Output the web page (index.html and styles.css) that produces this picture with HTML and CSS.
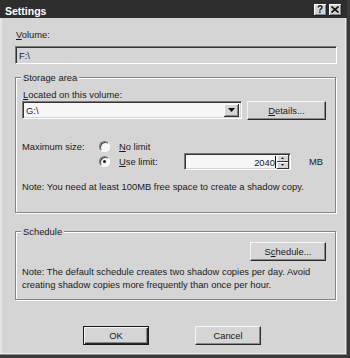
FILE: index.html
```html
<!DOCTYPE html>
<html lang="en">
<head>
    <meta charset="UTF-8">
    <meta name="viewport" content="width=device-width, initial-scale=1.0">
    <title>Settings</title>
    <link rel="stylesheet" href="styles.css">
</head>
<body>
    <div class="window">
        <div class="titlebar">
            <span class="title">Settings</span>
            <div class="title-buttons">
                <span class="tbtn help">?</span>
                <span class="tbtn close">
                    <svg width="8" height="7" viewBox="0 0 8 7"><path d="M0.5 0.5 L7.5 6.5 M7.5 0.5 L0.5 6.5" stroke="#111" stroke-width="1.6"/></svg>
                </span>
            </div>
        </div>

        <div class="content">
            <div class="label"><u>V</u>olume:</div>
            <div class="field disabled">F:\</div>

            <div class="group storage">
                <span class="legend">Storage area</span>
                <div class="label"><u>L</u>ocated on this volume:</div>
                <div class="combo-row">
                    <div class="combo field">
                        <span class="value">G:\</span>
                        <span class="drop">
                            <svg width="7" height="4" viewBox="0 0 7 4"><path d="M0 0 H7 L3.5 4 Z" fill="#111"/></svg>
                        </span>
                    </div>
                    <div class="btn details"><u>D</u>etails...</div>
                </div>

                <div class="size-row">
                    <div class="size-label">Maximum size:</div>
                    <div class="radios">
                        <div class="radio-line">
                            <span class="radio"></span>
                            <span class="radio-text"><u>N</u>o limit</span>
                        </div>
                        <div class="radio-line">
                            <span class="radio checked"></span>
                            <span class="radio-text"><u>U</u>se limit:</span>
                            <div class="spin-field field">
                                <span class="num">2040</span><span class="caret"></span>
                                <span class="spin">
                                    <span class="spin-btn"><svg width="3" height="2" viewBox="0 0 3 2"><path d="M0 2 H3 L1.5 0 Z" fill="#222"/></svg></span>
                                    <span class="spin-btn"><svg width="3" height="2" viewBox="0 0 3 2"><path d="M0 0 H3 L1.5 2 Z" fill="#222"/></svg></span>
                                </span>
                            </div>
                            <span class="unit">MB</span>
                        </div>
                    </div>
                </div>

                <p class="note">Note: You need at least 100MB free space to create a shadow copy.</p>
            </div>

            <div class="group schedule">
                <span class="legend">Schedule</span>
                <div class="btn-row right">
                    <div class="btn sched">S<u>c</u>hedule...</div>
                </div>
                <p class="note">Note: The default schedule creates two shadow copies per day. Avoid creating shadow copies more frequently than once per hour.</p>
            </div>

            <div class="dialog-buttons">
                <div class="btn default">OK</div>
                <div class="btn">Cancel</div>
            </div>
        </div>
    </div>
</body>
</html>
```

FILE: styles.css
```css
body { margin: 0; background: #d5d5d5; font-family: "Liberation Sans", Arial, sans-serif; font-size: 9.4px; line-height: 13px; color: #1a1a1a; }
u { text-decoration: underline; text-underline-offset: 1px; }

.window { width: 350px; height: 358px; box-sizing: border-box; background: #d5d5d5; border-right: 3px solid #3a3a3a; border-bottom: 3px solid #3a3a3a; box-shadow: inset -1px -1px 0 #8a8a8a, inset -2px -2px 0 #ececec, inset 2px 0 0 #e4e4e4; }

.titlebar { height: 18px; background: #2e2e2e; display: flex; justify-content: space-between; align-items: flex-start; }
.title { color: #fff; font-weight: bold; font-size: 10.5px; padding: 5px 0 0 5px; }
.title-buttons { display: flex; gap: 2px; padding: 4px 5px 0 0; }
.tbtn { width: 12px; height: 11px; background: #d5d5d5; display: flex; align-items: center; justify-content: center; font-weight: bold; font-size: 10px; line-height: 11px; color: #111; border-right: 1px solid #222; border-bottom: 1px solid #222; box-shadow: inset 1px 1px 0 #fff, inset -1px -1px 0 #888; }

.content { padding: 10px 10px 0 15px; }

.label { height: 13px; padding-left: 1px; }

.field { height: 18px; box-sizing: border-box; border: 1px solid; border-color: #7a7a7a #fff #fff #7a7a7a; box-shadow: inset 1px 1px 0 #333, inset -1px -1px 0 #d5d5d5; padding: 2px 0 0 3px; background: #f7f7f7; }
.field.disabled { background: #d5d5d5; margin-top: 5px; width: 322px; }

.group { position: relative; box-sizing: border-box; width: 321px; border: 1px solid #858585; box-shadow: 1px 1px 0 #fff, inset 1px 1px 0 #fff; padding: 0 9px 0 6px; }
.legend { position: absolute; top: -7px; left: 5px; padding: 0 2px; background: #d5d5d5; }

.storage { margin-top: 13px; height: 136px; padding-top: 10px; }
.combo-row { display: flex; justify-content: space-between; align-items: flex-start; }
.combo { width: 220px; display: flex; justify-content: space-between; padding: 2px 2px 0 3px; }
.drop { width: 14px; height: 12px; background: #d5d5d5; display: flex; align-items: center; justify-content: center; border-right: 1px solid #333; border-bottom: 1px solid #333; box-shadow: inset 1px 1px 0 #fff, inset -1px -1px 0 #888; }

.btn { box-sizing: border-box; height: 19px; display: flex; align-items: center; justify-content: center; background: #d5d5d5; border: 1px solid; border-color: #f4f4f4 #2a2a2a #2a2a2a #f4f4f4; box-shadow: inset -1px -1px 0 #8a8a8a; }
.details { width: 79px; }

.size-row { display: flex; margin-top: 20px; }
.size-label { width: 77px; }
.radios { display: flex; flex-direction: column; }
.radio-line { display: flex; align-items: center; min-height: 13px; }
.radio { width: 11px; height: 11px; box-sizing: border-box; border-radius: 50%; background: #f7f7f7; border: 1px solid; border-color: #7a7a7a #fff #fff #7a7a7a; box-shadow: inset 1px 1px 0 #444; display: flex; align-items: center; justify-content: center; }
.radio.checked::after { content: ""; width: 3px; height: 3px; border-radius: 50%; background: #111; }
.radio-text { margin-left: 9px; width: 65px; }
.spin-field { width: 107px; height: 17px; display: flex; justify-content: flex-end; align-items: flex-start; padding: 1px 1px 0 3px; }
.num { margin-top: 1px; }
.caret { width: 1px; height: 12px; background: #111; margin: 1px 1px 0 0; }
.spin { display: flex; flex-direction: column; }
.spin-btn { width: 12px; height: 7px; background: #d5d5d5; display: flex; align-items: center; justify-content: center; border-right: 1px solid #333; border-bottom: 1px solid #333; box-sizing: border-box; box-shadow: inset 1px 1px 0 #fff; }
.unit { margin-left: 18px; }

.note { margin: 10px 0 0; }

.schedule { margin-top: 18px; height: 69px; padding-top: 10px; }
.btn-row.right { display: flex; justify-content: flex-end; }
.sched { width: 76px; }
.schedule .note { margin-top: 4px; }

.dialog-buttons { display: flex; justify-content: center; gap: 46px; margin-top: 26px; margin-left: -15px; margin-right: -7px; }
.dialog-buttons .btn { width: 66px; }
.btn.default { border-color: #1a1a1a; box-shadow: inset 1px 1px 0 #f4f4f4, inset -1px -1px 0 #2a2a2a, inset -2px -2px 0 #8a8a8a; }
```
